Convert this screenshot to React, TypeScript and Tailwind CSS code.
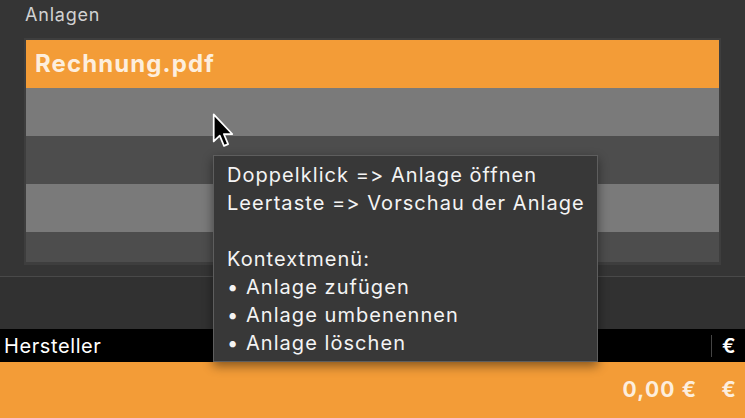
const tips = [
  "Doppelklick => Anlage öffnen",
  "Leertaste => Vorschau der Anlage",
  "",
  "Kontextmenü:",
  "• Anlage zufügen",
  "• Anlage umbenennen",
  "• Anlage löschen",
];

const rows = ["bg-[#7a7a7a]", "bg-[#4d4d4d]", "bg-[#7a7a7a]", "bg-[#4d4d4d]"];

function Cursor() {
  return (
    <svg
      className="absolute left-[211px] top-[112px]"
      width="26"
      height="38"
      viewBox="0 0 16 24"
    >
      <path
        d="M1.5 1.5 L1.5 18.6 L5.3 14.9 L8 21.4 L10.6 20.3 L7.9 13.9 L13.2 13.9 Z"
        fill="#000"
        stroke="#fff"
        strokeWidth="1.1"
        strokeLinejoin="round"
      />
    </svg>
  );
}

export default function App() {
  return (
    <div
      className="relative flex h-[418px] w-[745px] flex-col overflow-hidden bg-[#353535] [font-feature-settings:'calt'_0]"
      style={{ fontFamily: "Inter, 'Noto Sans', sans-serif" }}
    >
      {/* Anlagen section */}
      <div className="px-[25px] pt-[4px] text-[18px] leading-[22px] tracking-[0.8px] text-[#d2d2d2]">
        Anlagen
      </div>
      <div className="mx-[24px] mt-[12px] bg-[#3e3e3e] px-[2px] pb-[3px] pt-[2px]">
        <div className="h-[222px] overflow-hidden">
          <div className="flex h-[48px] items-center bg-[#f39c37] px-[9px] text-[24px] font-bold tracking-[1.1px] text-[#fdeedd]">
            Rechnung.pdf
          </div>
          {rows.map((c, i) => (
            <div key={i} className={`h-[48px] ${c}`} />
          ))}
        </div>
      </div>

      <div className="mt-[11px] h-[1px] bg-[#494949]" />
      <div className="h-[52px] bg-[#313131]" />

      {/* Hersteller bar */}
      <div className="flex h-[33px] items-center bg-black text-[20px] tracking-[0.6px] text-white">
        <span className="pl-[4px]">Hersteller</span>
        <div className="ml-auto h-[22px] w-[1px] bg-[#444]" />
        <span className="w-[33px] pl-[10px] font-semibold">€</span>
      </div>

      {/* Summe */}
      <div className="flex flex-1 items-center justify-end bg-[#f39c37] pr-[8px] text-[21px] font-bold tracking-[1.2px] text-[#fdeedd]">
        <span>0,00 €</span>
        <span className="ml-[24px]">€</span>
      </div>

      <Cursor />

      {/* Tooltip */}
      <div className="absolute left-[213px] top-[155px] h-[207px] w-[385px] border border-[#5e5e5e] bg-[#383838] px-[13px] pt-[5px] text-[20px] leading-[28px] tracking-[1.05px] text-[#f4f4f4] shadow-[0_4px_10px_rgba(0,0,0,0.45)]">
        {tips.map((t, i) => (
          <div key={i} className="h-[28px] whitespace-pre">
            {t}
          </div>
        ))}
      </div>
    </div>
  );
}
